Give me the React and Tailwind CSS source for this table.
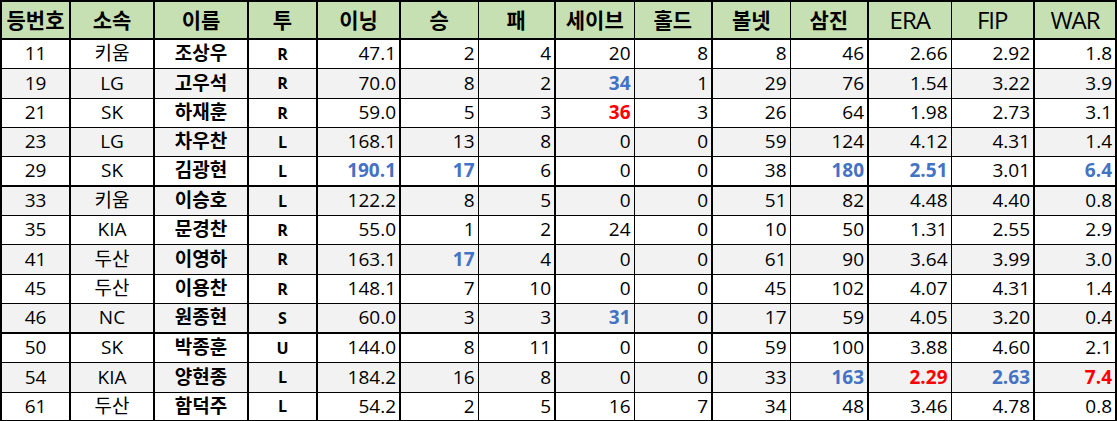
import React from 'react'

const headers = ['등번호', '소속', '이름', '투', '이닝', '승', '패', '세이브', '홀드', '볼넷', '삼진', 'ERA', 'FIP', 'WAR']
const widths = ['w-[69px]', 'w-[84px]', 'w-[94px]', 'w-[69px]', 'w-[83px]', 'w-[78px]', 'w-[77px]', 'w-[79px]', 'w-[78px]', 'w-[78px]', 'w-[78px]', 'w-[83px]', 'w-[83px]', 'w-[82px]']
// columns followed by a thin rule; the rest get the thick one
const thinRight = [5, 7, 9, 11]

// b = blue highlight, r = red highlight
const rows = [
  ['11', '키움', '조상우', 'R', '47.1', '2', '4', '20', '8', '8', '46', '2.66', '2.92', '1.8'],
  ['19', 'LG', '고우석', 'R', '70.0', '8', '2', 'b:34', '1', '29', '76', '1.54', '3.22', '3.9'],
  ['21', 'SK', '하재훈', 'R', '59.0', '5', '3', 'r:36', '3', '26', '64', '1.98', '2.73', '3.1'],
  ['23', 'LG', '차우찬', 'L', '168.1', '13', '8', '0', '0', '59', '124', '4.12', '4.31', '1.4'],
  ['29', 'SK', '김광현', 'L', 'b:190.1', 'b:17', '6', '0', '0', '38', 'b:180', 'b:2.51', '3.01', 'b:6.4'],
  ['33', '키움', '이승호', 'L', '122.2', '8', '5', '0', '0', '51', '82', '4.48', '4.40', '0.8'],
  ['35', 'KIA', '문경찬', 'R', '55.0', '1', '2', '24', '0', '10', '50', '1.31', '2.55', '2.9'],
  ['41', '두산', '이영하', 'R', '163.1', 'b:17', '4', '0', '0', '61', '90', '3.64', '3.99', '3.0'],
  ['45', '두산', '이용찬', 'R', '148.1', '7', '10', '0', '0', '45', '102', '4.07', '4.31', '1.4'],
  ['46', 'NC', '원종현', 'S', '60.0', '3', '3', 'b:31', '0', '17', '59', '4.05', '3.20', '0.4'],
  ['50', 'SK', '박종훈', 'U', '144.0', '8', '11', '0', '0', '59', '100', '3.88', '4.60', '2.1'],
  ['54', 'KIA', '양현종', 'L', '184.2', '16', '8', '0', '0', '33', 'b:163', 'r:2.29', 'b:2.63', 'r:7.4'],
  ['61', '두산', '함덕주', 'L', '54.2', '2', '5', '16', '7', '34', '48', '3.46', '4.78', '0.8'],
]

const rowHeights = ['h-[29px]', 'h-[30px]', 'h-[29px]', 'h-[29px]', 'h-[30px]', 'h-[29px]', 'h-[29px]', 'h-[30px]', 'h-[29px]', 'h-[30px]', 'h-[29px]', 'h-[30px]', 'h-[29px]']
// rows closing a group get a thick bottom rule
const thickBottom = [4, 9, 12]

const Cell = ({ value, col }) => {
  let text = value
  let color = 'text-black'
  let weight = ''
  if (value.startsWith('b:')) {
    text = value.slice(2)
    color = 'text-[#4472c4]'
    weight = 'font-bold'
  } else if (value.startsWith('r:')) {
    text = value.slice(2)
    color = 'text-[#ff0000]'
    weight = 'font-bold'
  }
  if (col === 2 || col === 3) weight = 'font-bold'

  const align = col < 4 ? 'text-center' : 'text-right pr-[3px]'
  const size = col === 3 ? 'text-[16px]' : 'text-[19px]'
  return <span className={`${align} ${color} ${weight} ${size} block`}>{text}</span>
}

export default function App() {
  return (
    <div className="w-[1117px] h-[421px] bg-white overflow-hidden" style={{ fontFamily: '"Open Sans", "Noto Sans CJK KR", sans-serif' }}>
      <table className="table-fixed border-collapse w-[1116px]">
        <colgroup>
          {widths.map((w, i) => (
            <col key={i} className={w} />
          ))}
        </colgroup>
        <thead>
          <tr className="h-[38px] bg-[#c6e0b4]">
            {headers.map((h, i) => (
              <th
                key={h}
                className={`p-0 border-t-2 border-b-2 border-black leading-none text-center ${
                  i >= 11 ? 'font-medium text-[24px] tracking-[-1px]' : 'font-bold text-[21px]'
                } ${i === 0 ? 'border-l-2' : ''} ${thinRight.includes(i) ? 'border-r' : 'border-r-2'}`}
              >
                {h}
              </th>
            ))}
          </tr>
        </thead>
        <tbody>
          {rows.map((row, r) => (
            <tr key={r} className={`${rowHeights[r]} ${r % 2 === 1 ? 'bg-[#f2f2f2]' : 'bg-white'}`}>
              {row.map((v, c) => (
                <td
                  key={c}
                  className={`p-0 leading-none border-black ${thickBottom.includes(r) ? 'border-b-2' : 'border-b'} ${
                    c === 0 ? 'border-l-2' : ''
                  } ${thinRight.includes(c) ? 'border-r' : 'border-r-2'}`}
                >
                  <Cell value={v} col={c} />
                </td>
              ))}
            </tr>
          ))}
        </tbody>
      </table>
    </div>
  )
}
